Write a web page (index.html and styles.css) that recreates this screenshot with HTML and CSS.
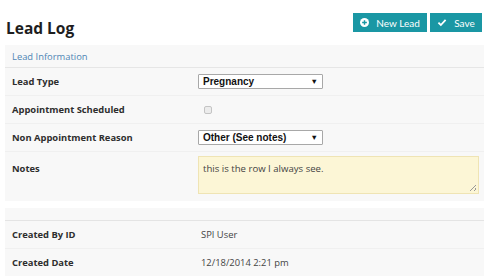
FILE: index.html
```html
<!DOCTYPE html>
<html lang="en">
  <head>
    <title>Lead Log</title>
    <link rel="stylesheet" href="styles.css">
  </head>
  <body>
    <div class="page">
      <div class="page-header">
        <h1>Lead Log</h1>
        <div class="actions">
          <button class="btn btn-new" type="button">
            <svg class="icon" viewBox="0 0 10 10" width="9" height="9">
              <circle cx="5" cy="5" r="5" fill="#fff" />
              <path d="M5 2.4v5.2M2.4 5h5.2" stroke="#1a97a4" stroke-width="1.6" />
            </svg>
            New Lead
          </button>
          <button class="btn btn-save" type="button">
            <svg class="icon" viewBox="0 0 10 10" width="10" height="9">
              <path d="M1 5.2l2.7 2.6L9 2.2" fill="none" stroke="#fff" stroke-width="2" />
            </svg>
            Save
          </button>
        </div>
      </div>

      <div class="panel">
        <div class="panel-title">Lead Information</div>
        <div class="row">
          <div class="label">Lead Type</div>
          <div class="value">
            <div class="select">Pregnancy<span class="arrow">&#9660;</span></div>
          </div>
        </div>
        <div class="row">
          <div class="label">Appointment Scheduled</div>
          <div class="value"><span class="checkbox"></span></div>
        </div>
        <div class="row">
          <div class="label">Non Appointment Reason</div>
          <div class="value">
            <div class="select">Other (See notes)<span class="arrow">&#9660;</span></div>
          </div>
        </div>
        <div class="row row-notes">
          <div class="label">Notes</div>
          <div class="value">
            <div class="notes">this is the row I always see.<span class="grip"></span></div>
          </div>
        </div>
      </div>

      <div class="panel panel-audit">
        <div class="panel-spacer"></div>
        <div class="row">
          <div class="label">Created By ID</div>
          <div class="value text">SPI User</div>
        </div>
        <div class="row">
          <div class="label">Created Date</div>
          <div class="value text">12/18/2014 2:21 pm</div>
        </div>
      </div>
    </div>
  </body>
</html>
```

FILE: styles.css
```css
*,
*:before,
*:after {
  box-sizing: border-box;
}

body {
  margin: 0;
  padding: 0;
  font-family: "Open Sans", Arial, sans-serif;
  background-color: #fff;
  color: #333;
}

.page {
  padding: 0 6px 0 5px;
}

.page-header {
  display: flex;
  align-items: flex-start;
  justify-content: space-between;
  height: 45px;
}

h1 {
  margin: 17px 0 0 1px;
  font-size: 15.5px;
  font-weight: 700;
  line-height: 22px;
  color: #1e1e1e;
}

.actions {
  display: flex;
  gap: 3px;
  margin-top: 13px;
  margin-right: 2px;
}

.btn {
  display: flex;
  align-items: center;
  justify-content: center;
  gap: 7px;
  height: 19px;
  padding: 0;
  border: none;
  background-color: #1a97a4;
  color: #fff;
  font-family: Lato, "Open Sans", sans-serif;
  font-size: 10px;
  cursor: pointer;
}

.btn-new {
  width: 74px;
}

.btn-save {
  width: 52px;
}

.icon {
  display: block;
}

.panel {
  background-color: #f8f8f8;
}

.panel-title {
  height: 23px;
  padding: 0 7px;
  line-height: 23px;
  font-size: 9.4px;
  color: #4f86b5;
  border-bottom: 1px solid #e6e6e6;
}

.row {
  display: flex;
  align-items: center;
  height: 28px;
  border-bottom: 1px solid #f0f0f0;
}

.label {
  width: 193px;
  padding-left: 7px;
  font-size: 9.4px;
  font-weight: 700;
  color: #2e2e2e;
}

.value {
  flex: 1;
}

.value.text {
  padding-left: 3px;
  font-size: 9.4px;
  color: #444;
}

.select {
  position: relative;
  width: 125px;
  height: 15px;
  padding-left: 4px;
  border: 1px solid #a8a8a8;
  border-radius: 1px;
  background-color: #fff;
  font-family: "Liberation Sans", Arial, sans-serif;
  font-size: 10px;
  font-weight: 700;
  line-height: 13px;
  color: #111;
}

.arrow {
  position: absolute;
  right: 4px;
  top: 0;
  font-size: 7.5px;
}

.checkbox {
  display: block;
  width: 8px;
  height: 8px;
  margin-left: 6px;
  border: 1px solid #c4c4c4;
  border-radius: 2px;
  background-color: #ececec;
}

.row-notes {
  align-items: flex-start;
  height: 49px;
  padding-top: 4px;
  border-bottom: none;
}

.row-notes .label {
  padding-top: 6px;
}

.notes {
  position: relative;
  width: 281px;
  height: 38px;
  padding: 5px 4px;
  border: 1px solid #efe4b4;
  background-color: #fcf6d6;
  font-size: 9.6px;
  color: #444;
}

.grip {
  position: absolute;
  right: 2px;
  bottom: 2px;
  width: 6px;
  height: 6px;
  background: linear-gradient(135deg, transparent 45%, #999 45%, #999 55%, transparent 55%, transparent 75%, #999 75%, #999 85%, transparent 85%);
}

.panel-audit {
  margin-top: 7px;
}

.panel-spacer {
  height: 13px;
  border-bottom: 1px solid #e4e4e4;
}
```
